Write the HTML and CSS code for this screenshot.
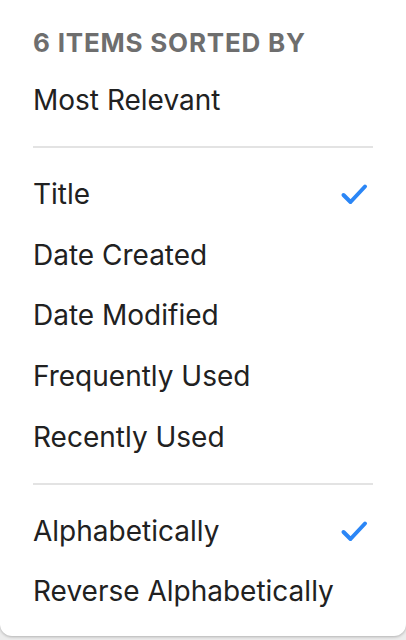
FILE: index.html
```html
<!DOCTYPE html>
<html>
<head>
<meta charset="utf-8">
<link rel="stylesheet" href="styles.css">
</head>
<body>
<div class="menu">
  <div class="header">6 ITEMS SORTED BY</div>
  <div class="item">Most Relevant</div>
  <div class="divider"></div>
  <div class="item">Title<svg class="check" viewBox="0 0 28 24"><path d="M3.5 13 L10.5 20 L25 4.5"/></svg></div>
  <div class="item">Date Created</div>
  <div class="item">Date Modified</div>
  <div class="item">Frequently Used</div>
  <div class="item">Recently Used</div>
  <div class="divider"></div>
  <div class="item">Alphabetically<svg class="check" viewBox="0 0 28 24"><path d="M3.5 13 L10.5 20 L25 4.5"/></svg></div>
  <div class="item">Reverse Alphabetically</div>
</div>
</body>
</html>
```

FILE: styles.css
```css
html, body {
  margin: 0;
  padding: 0;
  background: #ececec;
}
body {
  font-family: Inter, "Noto Sans", sans-serif;
  width: 406px;
  height: 640px;
  overflow: hidden;
}
.menu {
  background: #ffffff;
  height: 636px;
  box-sizing: border-box;
  border-radius: 0 0 12px 12px;
  box-shadow: 0 1px 3px rgba(0,0,0,0.25);
  padding: 16px 38px 0 33px;
}
.header {
  font-size: 26px;
  font-weight: 700;
  color: #6e6e6e;
  line-height: 54px;
  letter-spacing: 0.8px;
}
.item {
  display: flex;
  align-items: center;
  justify-content: space-between;
  height: 60.7px;
  font-size: 28px;
  color: #212121;
  line-height: 60.7px;
}
.divider {
  height: 2px;
  background: #e3e3e3;
  margin: 15.8px 0 15.5px 0;
  width: 340px;
}
.check {
  width: 28px;
  height: 24px;
  fill: none;
  stroke: #2b86f6;
  stroke-width: 4;
  stroke-linecap: round;
  stroke-linejoin: round;
}
```
